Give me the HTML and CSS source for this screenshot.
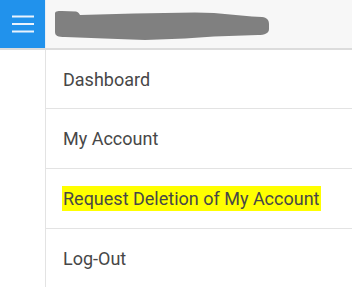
FILE: index.html
```html
<!DOCTYPE html>
<html>
<head>
<meta charset="utf-8">
<link rel="stylesheet" href="styles.css">
</head>
<body>
<header class="topbar">
  <div class="menu-btn">
    <svg width="45" height="48" viewBox="0 0 45 48" aria-hidden="true">
      <rect x="12" y="15.5" width="22" height="2" fill="#eaf3fd"/>
      <rect x="12" y="23" width="22" height="2" fill="#eaf3fd"/>
      <rect x="12" y="30.5" width="22" height="2" fill="#eaf3fd"/>
    </svg>
  </div>
  <div class="title">
    <svg class="redact" width="216" height="31" viewBox="0 0 216 31" aria-hidden="true">
      <path d="M1 4 C1 1 3 1 8 1 L22 1.5 C24 2 25 3 26 5 L80 3.5 L141 2.5 L160 3 L198 6.5 L208 7 C213 7.5 215 10 215 14 L215 19 C215 23 211 25 204 25 L160 26.5 L131 28.5 L91 30 L50 28.5 L11 27 C4 27 1 26 1 22 Z" fill="#808080"/>
    </svg>
  </div>
</header>
<nav class="menu">
  <a class="item" href="#">Dashboard</a>
  <a class="item" href="#">My Account</a>
  <a class="item" href="#"><span class="mark">Request Deletion of My Account</span></a>
  <a class="item" href="#">Log-Out</a>
</nav>
</body>
</html>
```
FILE: styles.css
```css
html, body {
  margin: 0;
  padding: 0;
  background: #ffffff;
}
body {
  width: 359px;
  height: 287px;
  overflow: hidden;
  font-family: Roboto, "Liberation Sans", sans-serif;
}
.topbar {
  display: flex;
  width: 352px;
  height: 48px;
  background: #f7f7f7;
  border-bottom: 2px solid #dcdcdc;
}
.menu-btn {
  width: 45px;
  height: 48px;
  background: #2192ec;
  flex: none;
}
.menu-btn svg {
  display: block;
}
.title {
  flex: 1;
  padding: 10px 0 0 8px;
  border-left: 1px solid #e6eef7;
}
.redact {
  display: block;
}
.menu {
  margin-left: 45px;
  width: 306px;
  border-left: 1px solid #e3e3e3;
  display: flex;
  flex-direction: column;
}
.item {
  display: flex;
  align-items: center;
  height: 59px;
  padding-left: 17px;
  border-bottom: 1px solid #e3e3e3;
  color: #474747;
  font-size: 18px;
  text-decoration: none;
}
.item:first-child {
  height: 58px;
}
.mark {
  background: #ffff00;
  padding: 2px 2px 2px 1px;
  margin-left: -1px;
}
```
